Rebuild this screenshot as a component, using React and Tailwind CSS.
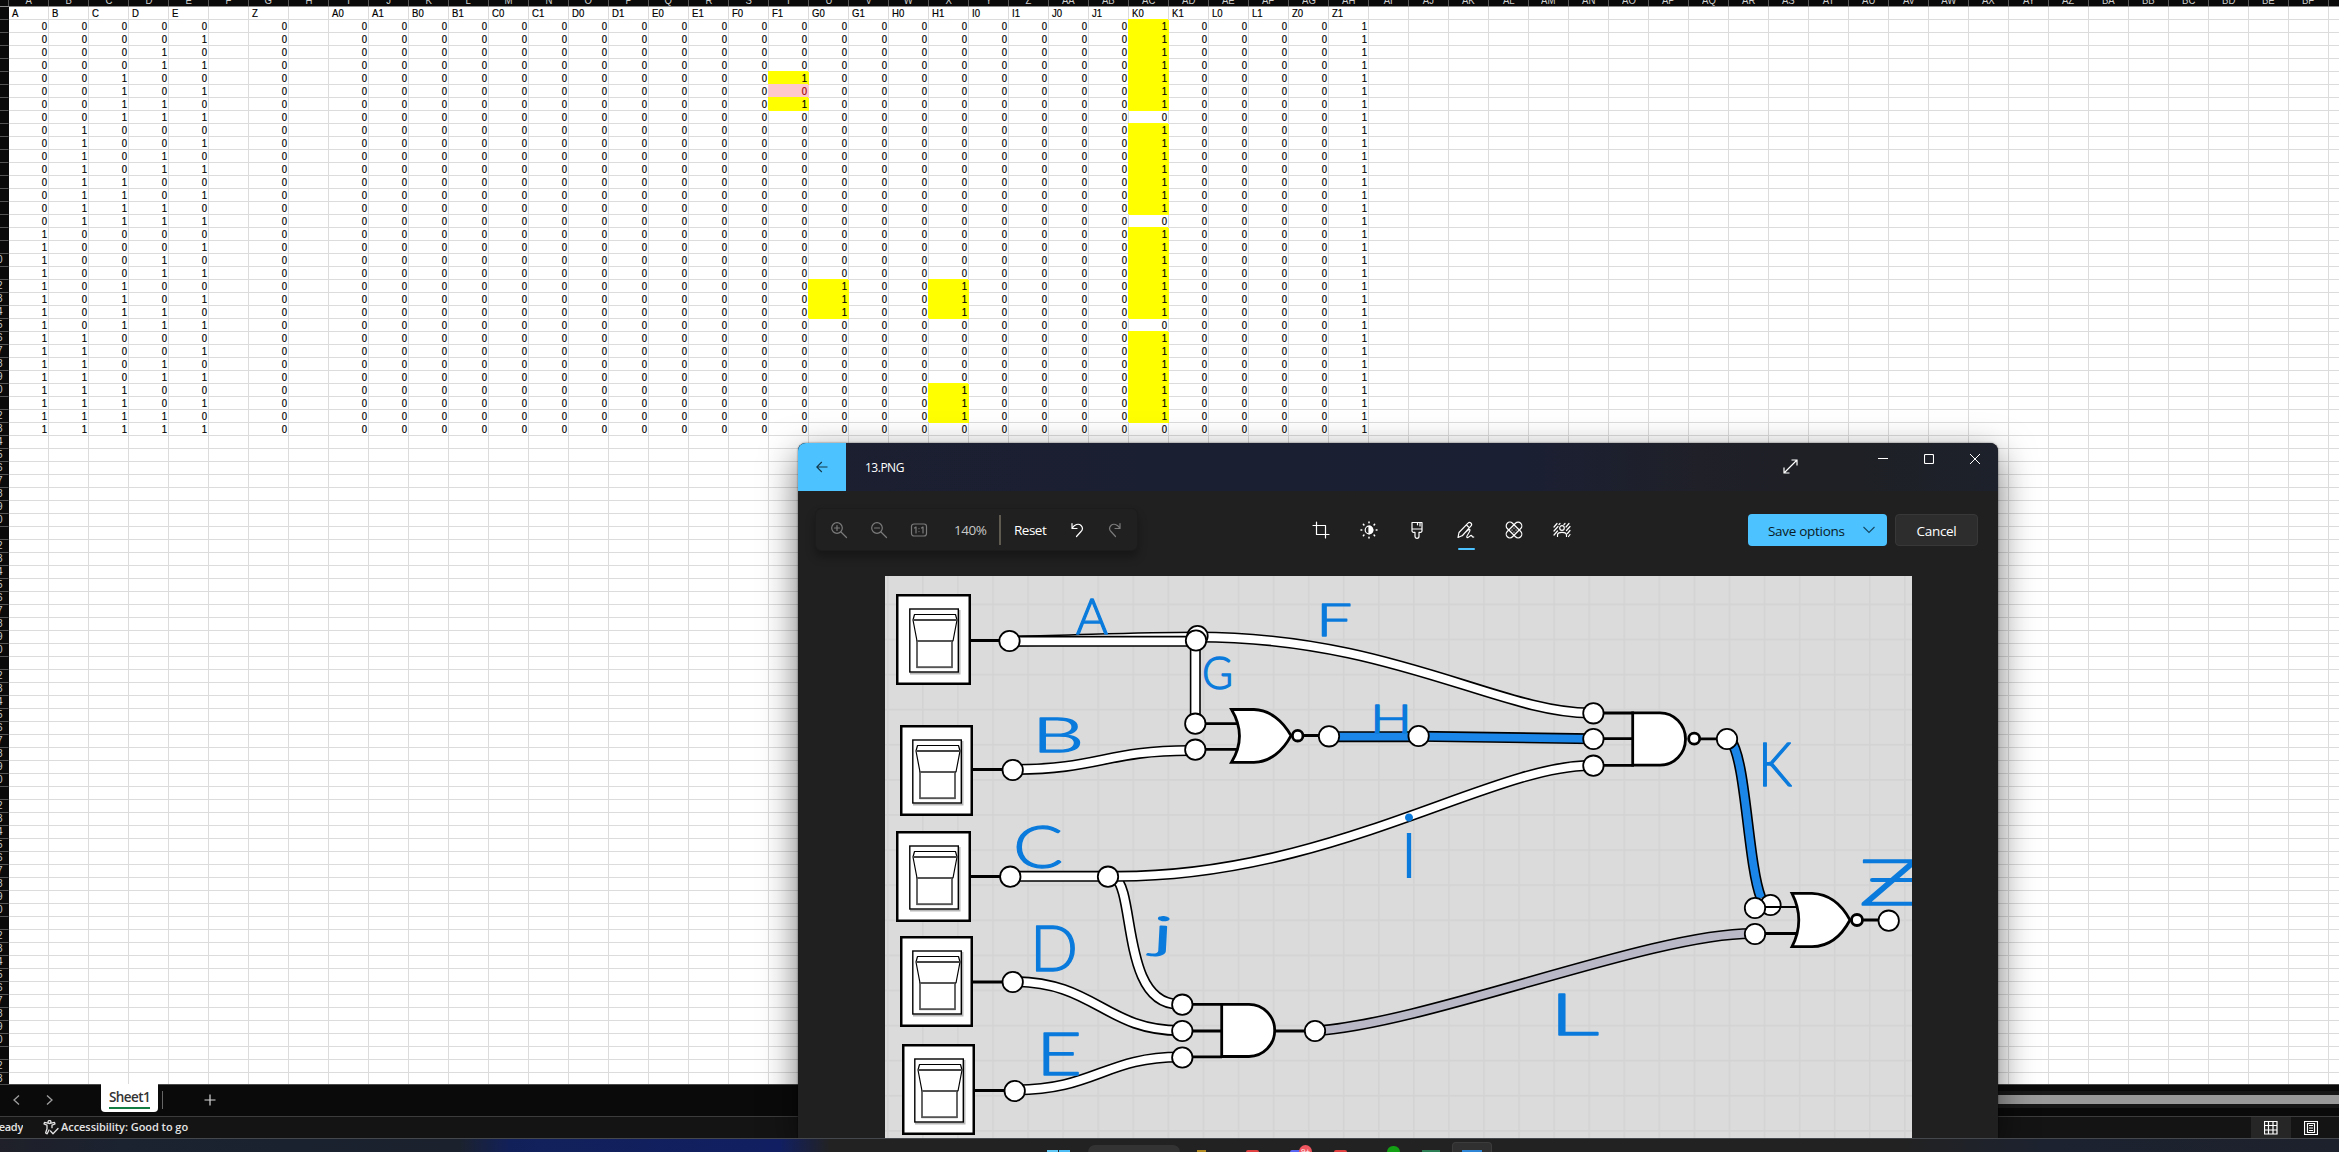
import React from "react";

const COLS = 59;
const ROWS = 83;
const HEADERS = ["A", "B", "C", "D", "E", "", "Z", "", "A0", "A1", "B0", "B1", "C0", "C1", "D0", "D1", "E0", "E1", "F0", "F1", "G0", "G1", "H0", "H1", "I0", "I1", "J0", "J1", "K0", "K1", "L0", "L1", "Z0", "Z1"];

function colName(i) {
  return i < 26 ? String.fromCharCode(65 + i) : String.fromCharCode(64 + Math.floor(i / 26)) + String.fromCharCode(65 + (i % 26));
}

function cellAt(r, c) {
  if (r === 0) return { text: HEADERS[c] || "", kind: "head" };
  const i = r - 1;
  if (i > 31 || c > 33 || c === 5 || c === 7) return { text: "", kind: "plain" };
  if (c < 5) return { text: String((i >> (4 - c)) & 1), kind: "plain" };
  const h = HEADERS[c];
  if (h === "Z1") return { text: "1", kind: "plain" };
  if (h === "F1" && i === 5) return { text: "0", kind: "bad" };
  const mid = i >= 20 && i <= 22;
  const low = i >= 28 && i <= 30;
  const on =
    (h === "F1" && (i === 4 || i === 6)) ||
    (h === "G0" && mid) ||
    (h === "H1" && (mid || low)) ||
    (h === "K0" && i % 8 !== 7);
  return on ? { text: "1", kind: "hot" } : { text: "0", kind: "plain" };
}

const KIND = {
  head: "justify-start pl-[3px] border-[#dcdcdc] text-black",
  plain: "justify-end pr-[1px] border-[#dcdcdc] text-black",
  hot: "justify-end pr-[1px] border-[#ffff00] bg-[#ffff00] text-black shadow-[-1px_-1px_0_#ffff00]",
  bad: "justify-end pr-[1px] border-[#ffc7ce] bg-[#ffc7ce] text-[#9c0006] shadow-[-1px_-1px_0_#ffc7ce]",
};

function Sheet() {
  return (
    <div className="h-[1084px] shrink-0 overflow-hidden bg-white font-['Liberation_Sans',sans-serif]">
      <div className="flex h-[7px] w-[2369px] border-b border-[#8a8a8a] bg-[#0a0a0a]">
        <div className="w-[9px] shrink-0 border-r border-[#555]" />
        {Array.from({ length: COLS }, (_, c) => (
          <div key={c} className="flex h-[6px] w-10 shrink-0 items-end justify-center overflow-hidden border-r border-[#555]">
            <span className="mb-[1px] inline-block scale-x-[.87] text-[11px] leading-[9px] text-[#d0d0d0]">{colName(c)}</span>
          </div>
        ))}
      </div>
      {Array.from({ length: ROWS }, (_, r) => (
        <div key={r} className="flex h-[13px] w-[2369px]">
          <div className="flex w-[9px] shrink-0 items-center justify-start overflow-hidden border-r border-b border-r-[#0a0a0a] border-b-[#555] bg-[#0a0a0a] text-[10px] leading-[12px] text-[#c8c8c8]">
            {r >= 19 && (r + 1) % 10 !== 1 ? <span className="-ml-[3px]">{(r + 1) % 10}</span> : null}
          </div>
          {Array.from({ length: COLS }, (_, c) => {
            const cell = cellAt(r, c);
            return (
              <div key={c} className={"flex h-[13px] w-10 shrink-0 items-center border-r border-b text-[11px] leading-[13px] [-webkit-text-stroke:0.2px_currentColor] " + KIND[cell.kind]}>
                {cell.text ? (
                  <span className={"inline-block pt-px " + (r === 0 ? "origin-left scale-x-[.87]" : "origin-right scale-x-[.87]")}>{cell.text}</span>
                ) : null}
              </div>
            );
          })}
        </div>
      ))}
    </div>
  );
}

function SheetTabs() {
  return (
    <div className="flex h-8 shrink-0 border-t border-[#4a4a4a] bg-[#0a0a0a]">
      <div className="flex w-[101px] items-center text-[#a0a0a0]">
        <svg className="ml-[12px] mt-[-1px]" width="9" height="12" viewBox="0 0 9 12" fill="none" stroke="currentColor" strokeWidth="1.3"><path d="M7 1.5 2 6l5 4.5" /></svg>
        <svg className="ml-[24px] mt-[-1px]" width="9" height="12" viewBox="0 0 9 12" fill="none" stroke="currentColor" strokeWidth="1.3"><path d="M2 1.5 7 6l-5 4.5" /></svg>
      </div>
      <div className="-mt-px flex h-[28px] w-[57px] flex-col items-center rounded-b-[4px] bg-white">
        <div className="mt-[4px] flex h-[19px] w-[41px] items-center justify-center border-0 font-['Open_Sans','Noto_Sans',sans-serif] text-[13.5px] font-semibold leading-[19px] tracking-[-0.6px] text-[#333]">Sheet1</div>
        <div className="h-[2px] w-[41px] bg-[#107c41]" />
      </div>
      <div className="mt-[6px] ml-[4px] h-[18px] w-px bg-[#666]" />
      <svg className="mt-[9px] ml-[41px]" width="12" height="12" viewBox="0 0 12 12" stroke="#d8d8d8" strokeWidth="1.2"><path d="M6 0.5v11M0.5 6h11" /></svg>
      <div className="mt-[6px] ml-auto flex h-[17px] w-[1400px] items-center bg-[#171717]">
        <div className="h-[9px] w-full bg-[#9a9a9a]" />
      </div>
    </div>
  );
}

function StatusBar() {
  return (
    <div className="flex h-[22px] shrink-0 items-center border-t border-[#3c3c3c] bg-[#141414] font-['Open_Sans','Noto_Sans',sans-serif] text-[11px] font-semibold text-[#e4e4e4]">
      <div className="flex w-[23px] justify-end overflow-hidden tracking-[-0.3px]">Ready</div>
      <svg className="ml-[20px]" width="16" height="15" viewBox="0 0 16 15" fill="none" stroke="#e4e4e4" strokeWidth="1.3" strokeLinejoin="round" strokeLinecap="round">
        <circle cx="6.5" cy="2" r="1.5" />
        <path d="M5 3.2 1.5 2.4 1 4l3 1.2v3.5L2.6 13l1.6.8L6 10M8 3.2l3.5-.8.5 1.6-3 1.2v2.5M7.5 11l2.5 2.7 5-5.2" />
      </svg>
      <div className="ml-[2px] whitespace-nowrap tracking-[-0.05px]">Accessibility: Good to go</div>
      <div className="ml-auto flex h-full w-[40px] items-center justify-center bg-[#262626]">
        <svg width="14" height="14" viewBox="0 0 14 14" fill="none" stroke="#fff" strokeWidth="1.2"><path d="M.5.5h12.500v12.500H.5zM4.500.5v13M9 .5v13M.5 4.500h13M.5 9h13" /></svg>
      </div>
      <div className="mr-[8px] flex h-full w-[40px] items-center justify-center">
        <svg width="14" height="14" viewBox="0 0 14 14" fill="none" stroke="#fff" strokeWidth="1.2"><path d="M.5.5h13v13H.5zM3.500 2.500h7v9h-7zM5 4.500h4M5 7h4M5 9.500h4" /></svg>
      </div>
    </div>
  );
}

function Taskbar() {
  return (
    <div className="flex h-[14px] shrink-0 items-end overflow-hidden border-t border-[#45484c] bg-[linear-gradient(90deg,#1f2029_0px,#1b2230_120px,#1b222e_460px,#12205a_510px,#111f62_780px,#222222_830px,#222222_1900px,#1c2230_2050px,#1d212c_2339px)]">
      <div className="ml-[1047px] flex gap-px"><i className="h-[2px] w-[11px] bg-[#5fc8f5]" /><i className="h-[2px] w-[11px] bg-[#4dbdf5]" /></div>
      <div className="ml-[18px] h-[7px] w-[92px] rounded-t-[12px] bg-[#333333]" />
      <div className="ml-[17px] h-[2px] w-[9px] bg-[#b08a20]" />
      <div className="ml-[40px] h-[2px] w-[13px] rounded-t-full bg-[#e04040]" />
      <div className="ml-[31px] h-[2px] w-[14px] rounded-t-full bg-[#5865f2]" />
      <div className="-ml-[5px] h-[7px] w-[13px] overflow-hidden rounded-t-full bg-[#f0565f] text-center font-['Open_Sans',sans-serif] text-[8px] leading-[11px] text-white">9+</div>
      <div className="ml-[22px] h-[2px] w-[13px] rounded-t-full bg-[#e04040]" />
      <div className="ml-[40px] h-[6px] w-[13px] rounded-t-full bg-[#14a014]" />
      <div className="ml-[22px] h-[2px] w-[18px] bg-[#2d7d55]" />
      <div className="ml-[12px] flex h-[10px] w-[40px] items-end justify-center rounded-t-[4px] border border-b-0 border-[#3c3c3c] bg-[#303030]"><i className="h-[2px] w-[20px] bg-[#2f86d6]" /></div>
    </div>
  );
}

const SWITCHES = [
  [896, 594, 75], [900, 725, 73], [896, 831, 75], [900, 936, 73], [902, 1044, 73],
];

function Switch({ x, y, w }) {
  const k = w === 75 ? 0 : -1;
  return (
    <g transform={`translate(${x} ${y})`}>
      <rect x="1.25" y="1.25" width={w - 2.5} height="88.5" fill="#fff" stroke="#000" strokeWidth="2.5" />
      <g transform={`translate(${k} 0)`}>
        <path d="M63.500 16v63.500H14" fill="none" stroke="#b8b8b8" strokeWidth="2" />
        <rect x="13.8" y="15" width="48.500" height="63" fill="#fff" stroke="#000" strokeWidth="1.4" />
        <path d="M18.500 20.500h41l1.500 5.500-4 21H21L17 26z" fill="#fff" stroke="#000" strokeWidth="1.2" strokeLinejoin="round" />
        <path d="M17 26h44" stroke="#444" strokeWidth="1.8" />
        <rect x="21" y="47" width="35" height="26.500" fill="#fff" stroke="#000" strokeWidth="1.2" />
        <path d="M21 47h35M21 73.200h35" stroke="#555" strokeWidth="1.8" />
      </g>
    </g>
  );
}

function Wire({ d, color = "#fff" }) {
  return (
    <g fill="none">
      <path d={d} stroke="#000" strokeWidth="11" />
      <path d={d} stroke={color} strokeWidth="7.8" />
    </g>
  );
}

const NODES = [
  [1009.5, 641], [1197.5, 636], [1196, 640.5], [1195.3, 723.7], [1195.3, 749.7], [1012.7, 770],
  [1329, 736.3], [1418.6, 736], [1593.4, 713.3], [1593.4, 739], [1593.4, 765.7], [1727, 739],
  [1770.5, 905], [1755, 908], [1755, 934], [1888.7, 920.7], [1010.3, 876.7], [1108, 876.7],
  [1012.7, 982], [1014.7, 1091], [1182.3, 1004.7], [1182.3, 1031], [1182.3, 1057.5], [1315, 1031],
];

const INK = [
  ["A", 1076, 634, 32, 36], ["F", 1316, 636, 36, 33], ["G", 1202, 689, 31, 32], ["B", 1032, 752, 52, 34],
  ["H", 1370, 733, 42, 28], ["C", 1013, 868, 50, 43], ["D", 1030, 971, 48, 45], ["E", 1036, 1075, 46, 43],
  ["K", 1758, 786, 34, 44], ["L", 1549, 1035, 50, 41], ["Z", 1859, 905, 62, 45],
];

function Circuit() {
  return (
    <svg className="block" width="1027" height="562" viewBox="885 576 1027 562">
      <defs>
        <pattern id="board" x="887" y="603.5" width="35.07" height="35.1" patternUnits="userSpaceOnUse">
          <path d="M.8 0v35.100M0 .8h35.070" stroke="#d3d3d3" strokeWidth="1.6" />
        </pattern>
      </defs>
      <rect x="885" y="576" width="1027" height="562" fill="#dbdbdb" />
      <rect x="885" y="576" width="1027" height="562" fill="url(#board)" />
      <path
        d="M971 640.500h30M973 769.500h30M971 876.500h30M973 982h30M975 1090.500h30M1205 723.700h33M1205 749.300h33M1303 735.500h17M1604 713h30M1604 738.700h30M1604 765.300h30M1699 738.800h18M1765 933.500h32M1862 920h18M1192 1004.300h30M1192 1031h30M1192 1056.800h30M1275 1031h30"
        stroke="#000" strokeWidth="2.8" fill="none"
      />
      {SWITCHES.map(([x, y, w]) => <Switch key={y} x={x} y={y} w={w} />)}
      <Wire d="M1009 641C1080 640 1130 637 1197 637C1390 637 1500 713 1590 713" />
      <Wire d="M1009 641.300H1196" />
      <Wire d="M1195.300 640V724" />
      <Wire d="M1012 769.500C1100 769.500 1105 750.500 1190 750.500" />
      <Wire d="M1329 736.700H1418" color="#1b86e8" />
      <Wire d="M1418 736.300L1593 738.800" color="#1b86e8" />
      <Wire d="M1115 878C1135 890 1122 1004 1178 1004" />
      <Wire d="M1010 876.300H1118C1330 876.300 1490 766 1590 765.500" />
      <Wire d="M1012 981.500C1095 981.500 1105 1030.500 1180 1030.500" />
      <Wire d="M1014 1090C1095 1090 1105 1057 1180 1057" />
      <Wire d="M1315 1031C1430 1023 1650 933.500 1752 933.500" color="#b8b8c6" />
      <Wire d="M1731 741C1746 760 1748 865 1761 898" color="#1b86e8" />
      <g fill="#fff" stroke="#000" strokeWidth="2.8">
        <path d="M1231.500 709.500H1254C1270 710 1283 721 1291 735.700C1283 751 1270 762 1254 762.300H1231.500C1242 745 1242 727 1231.500 709.500Z" />
        <circle cx="1297.700" cy="735.700" r="5.300" />
        <path d="M1792 893.300H1812C1830 894 1842 905 1850 920C1842 935 1830 946.500 1812 946.700H1792C1801 929 1801 911 1792 893.300Z" />
        <circle cx="1857" cy="920" r="5.500" />
        <path d="M1632.700 712.800H1660A25.500 26.200 0 0 1 1660 765.200H1632.700Z" />
        <circle cx="1694.200" cy="738.700" r="5.500" />
        <path d="M1221.700 1004.300H1249A25.700 26.100 0 0 1 1249 1056.500H1221.700Z" />
      </g>
      {NODES.map(([x, y], i) => <circle key={i} cx={x} cy={y} r="10.2" fill="#fff" stroke="#000" strokeWidth="1.8" />)}
      <path d="M1765 907h31" stroke="#000" strokeWidth="2" />
      <g fill="#0a7bdc" stroke="#0a7bdc" strokeWidth="1.3" strokeLinejoin="round" fontFamily="Lato, 'Open Sans', sans-serif" fontWeight="300">
        {INK.map(([ch, x, y, w, h]) => (
          <text key={ch} x={x} y={y} fontSize={h / 0.72} textLength={w} lengthAdjust="spacingAndGlyphs">{ch}</text>
        ))}
        <text x="1152" y="948" fontSize="44" textLength="22" lengthAdjust="spacingAndGlyphs" transform="rotate(3 1163 935)">j</text>
        <text x="1399" y="878" fontSize="90" textLength="20" lengthAdjust="spacingAndGlyphs" strokeWidth="0">i</text>
      </g>
      <path d="M1872 880h40" stroke="#0a7bdc" strokeWidth="4" strokeLinecap="round" />
    </svg>
  );
}

function Glyph({ children, className = "", size = 18 }) {
  return (
    <svg className={"shrink-0 " + className} width={size} height={size} viewBox="0 0 18 18" fill="none" stroke="currentColor" strokeWidth="1.2" strokeLinecap="round" strokeLinejoin="round">
      {children}
    </svg>
  );
}

function PhotoWindow() {
  return (
    <div className="absolute top-[443px] left-[798px] flex h-[695px] w-[1200px] flex-col rounded-t-[8px] bg-[#202020] font-['Open_Sans','Noto_Sans',sans-serif] shadow-[0_12px_36px_rgba(0,0,0,0.55),0_0_2px_rgba(0,0,0,0.6)]">
      <div className="flex h-12 shrink-0 overflow-hidden rounded-t-[8px] bg-[linear-gradient(90deg,#1b1f30_0%,#1a1f33_60%,#1f2028_75%,#1e2025_88%,#1d212b_100%)] text-white">
        <div className="flex w-12 items-center justify-center bg-[#4cc2ff] text-[#14384a]">
          <svg width="12" height="12" viewBox="0 0 12 12" fill="none" stroke="currentColor" strokeWidth="1.1"><path d="M11.500 6H.8M5.800 1 .8 6l5 5" /></svg>
        </div>
        <div className="mt-[2px] ml-[19px] self-center text-[12px] tracking-[-0.5px]">13.PNG</div>
        <svg className="mt-[16px] ml-auto" width="15" height="15" viewBox="0 0 15 15" fill="none" stroke="#fff" strokeWidth="1.2"><path d="M1 14 14 1M8.500 1H14v5.500M1 8.500V14h5.500" /></svg>
        <svg className="mt-[11px] ml-[80px]" width="10" height="11" viewBox="0 0 10 11" stroke="#fff" strokeWidth="1"><path d="M0 4.500h10" /></svg>
        <svg className="mt-[11px] ml-[36px]" width="10" height="10" viewBox="0 0 10 10" fill="none" stroke="#fff" strokeWidth="1.1"><rect x=".5" y=".5" width="9" height="9" rx="1" /></svg>
        <svg className="mt-[11px] mr-[18px] ml-[36px]" width="10" height="10" viewBox="0 0 10 10" fill="none" stroke="#fff" strokeWidth="1"><path d="m0 0 10 10M10 0 0 10" /></svg>
      </div>
      <div className="flex h-[85px] shrink-0 items-start">
        <div className="mt-[17px] ml-[17px] flex h-[43px] w-[323px] items-center rounded-[6px] border border-[#1c1c1c] bg-[#202020] text-[#7b7b7b] shadow-[0_6px_10px_rgba(0,0,0,0.3)]">
          <Glyph className="ml-[14px]"><circle cx="7" cy="7" r="5.300" /><path d="m11 11 5.500 5.500M7 4.500v5M4.500 7h5" /></Glyph>
          <Glyph className="ml-[22px]"><circle cx="7" cy="7" r="5.300" /><path d="m11 11 5.500 5.500M4.500 7h5" /></Glyph>
          <Glyph className="ml-[22px]"><rect x="1.500" y="3" width="15" height="12" rx="2.500" /><path d="M4.500 7 6 6v6M11.500 7 13 6v6M9 7.500v.1M9 10.500v.1" /></Glyph>
          <span className="mt-[2px] ml-[26px] w-[34px] text-[13.5px] tracking-[-0.5px] text-[#c8c8c8]">140%</span>
          <span className="ml-[11px] h-[30px] w-[2px] bg-[#5f5a50]" />
          <span className="mt-[2px] ml-[13px] w-[34px] text-[13.5px] tracking-[-0.5px] text-white">Reset</span>
          <Glyph className="ml-[20px] text-white"><path d="M4 2.500v5h5M4.300 7C6.500 3.500 10.500 2 13 4.500c2.200 2.300 1.500 4.500 0 6L8.500 15.500" /></Glyph>
          <Glyph className="ml-[20px]"><path d="M14 2.500v5H9M13.700 7C11.500 3.500 7.500 2 5 4.500c-2.200 2.300-1.500 4.500 0 6L9.500 15.500" /></Glyph>
        </div>
        <div className="mt-[30px] ml-[174px] flex items-start gap-[30.200px] text-white">
          <Glyph><path d="M4.500 1v12.500H17M1 4.500h12.500V17" /></Glyph>
          <Glyph>
            <circle cx="9" cy="9" r="3.800" /><path d="M9 5.200a3.800 3.800 0 0 1 0 7.600z" fill="currentColor" />
            <path d="M9 1v.8M9 16.200v.8M1 9h.8M16.200 9h.8M3.400 3.400l.5.5M14.100 14.100l.5.5M3.400 14.600l.5-.5M14.100 3.900l.5-.5" strokeWidth="1.500" />
          </Glyph>
          <Glyph><path d="M4 1.500h10v8.300a1.500 1.500 0 0 1-1.500 1.500H11v4a2 2 0 0 1-4 0v-4H5.500A1.500 1.500 0 0 1 4 9.800zM4 8h10M9.500 1.500v2.300M12 1.500V5" /></Glyph>
          <div className="flex w-[18px] flex-col items-center">
            <Glyph><path d="M2 11.500 11 2.200a2 2 0 0 1 3 2.700L5.500 14.500 1 16.500zM5.500 14.500c3-3.500 7-7 7.500-5.500s-4.500 6.500-3 7.500 3.500-3 4.500-2 .5 1.800 2.300 1.500M9.500 4l2.700 2.700" /></Glyph>
            <div className="mt-[9px] ml-[2px] h-[2px] w-[17px] shrink-0 rounded bg-[#4cc2ff]" />
          </div>
          <Glyph>
            <rect x="5.300" y="-.5" width="7.400" height="19" rx="3.700" transform="rotate(45 9 9)" /><rect x="5.300" y="-.5" width="7.400" height="19" rx="3.700" transform="rotate(-45 9 9)" />
            <path d="M9 7v.1M9 11v.1M7 9h.1M11 9h.1" />
          </Glyph>
          <Glyph>
            <circle cx="9" cy="7" r="2.300" /><path d="M4.500 15.500v-1.500c0-2 1.500-2.700 4.500-2.700s4.500.7 4.500 2.700v1.500M1 6l3-3.500M1 10l4-4.500M1 14l3.500-4M6 3.500l1-1M11 3.500l1-1M13 6l3-3.500M13.500 9.500 17 5.500M14.500 12.500 17 9.500M15.500 15.500 17 13.500" />
          </Glyph>
        </div>
        <div className="mt-[23px] ml-auto flex h-8 w-[139px] items-center rounded-[4px] bg-[#4cc2ff] text-[13.5px] text-[#0a1a24]">
          <span className="mt-[2px] ml-5 w-[80px] whitespace-nowrap tracking-[-0.3px]">Save options</span>
          <svg className="ml-[15px]" width="12" height="8" viewBox="0 0 12 8" fill="none" stroke="#14465f" strokeWidth="1.100"><path d="m.5 1 5.500 5.500L11.500 1" /></svg>
        </div>
        <div className="mt-[23px] mr-[20px] ml-[8px] flex h-8 w-[83px] items-center justify-center rounded-[4px] border border-[#383838] bg-[#2d2d2d] pt-[2px] text-[13.5px] tracking-[-0.3px] text-white">Cancel</div>
      </div>
      <div className="ml-[87px] h-[562px] w-[1027px]">
        <Circuit />
      </div>
    </div>
  );
}

export default function App() {
  return (
    <div className="relative flex h-[1152px] w-[2339px] flex-col overflow-hidden bg-black">
      <Sheet />
      <SheetTabs />
      <StatusBar />
      <PhotoWindow />
      <div className="relative z-10"><Taskbar /></div>
    </div>
  );
}
